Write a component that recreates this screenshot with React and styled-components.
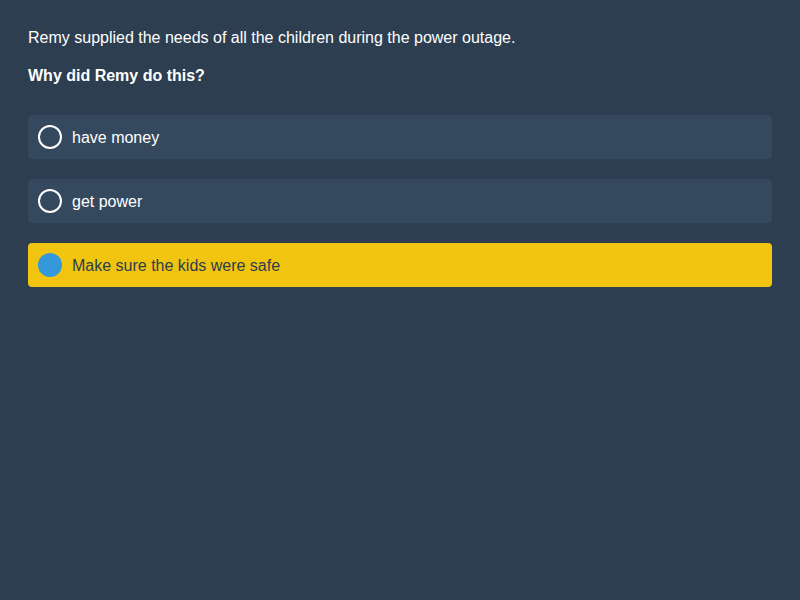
import React from 'react';
import styled, { createGlobalStyle } from 'styled-components';

const GlobalStyle = createGlobalStyle`
  html, body {
    margin: 0;
    padding: 0;
    background: #2c3e50;
    font-family: 'Liberation Sans', Arial, sans-serif;
  }
`;

const options = [
  { label: 'have money', selected: false },
  { label: 'get power', selected: false },
  { label: 'Make sure the kids were safe', selected: true },
];

const App = () => {
  return (
    <>
      <GlobalStyle />
      <Page>
        <Context>Remy supplied the needs of all the children during the power outage.</Context>
        <Question>Why did Remy do this?</Question>
        <Options>
          {options.map((o) => (
            <Option key={o.label} selected={o.selected}>
              <Radio selected={o.selected} />
              <Label selected={o.selected}>{o.label}</Label>
            </Option>
          ))}
        </Options>
      </Page>
    </>
  );
};

const Page = styled.div`
  min-height: 600px;
  box-sizing: border-box;
  padding: 29px 28px;
  color: #fff;
`;

const Context = styled.p`
  margin: 0;
  font-size: 16px;
  line-height: 18px;
`;

const Question = styled.p`
  margin: 20px 0 0;
  font-size: 16px;
  line-height: 18px;
  font-weight: bold;
`;

const Options = styled.div`
  display: flex;
  flex-direction: column;
  gap: 20px;
  margin-top: 30px;
`;

const Option = styled.div`
  display: flex;
  align-items: center;
  gap: 10px;
  height: 44px;
  padding: 0 10px;
  border-radius: 4px;
  background: ${(p) => (p.selected ? '#f1c40f' : '#34495e')};
`;

const Radio = styled.span`
  box-sizing: border-box;
  width: 24px;
  height: 24px;
  border-radius: 50%;
  border: ${(p) => (p.selected ? 'none' : '2px solid #fff')};
  background: ${(p) => (p.selected ? '#3498db' : 'transparent')};
`;

const Label = styled.span`
  padding-top: 2px;
  font-size: 16px;
  line-height: 18px;
  color: ${(p) => (p.selected ? '#2c3e50' : '#fff')};
`;

export default App;
